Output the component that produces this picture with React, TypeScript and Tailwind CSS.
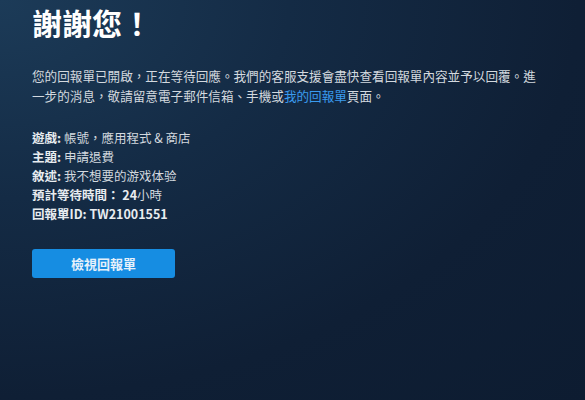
export default function App() {
  const font = { fontFamily: '"Noto Sans CJK TC", "Noto Sans", sans-serif' };
  return (
    <div
      lang="zh-Hant-TW"
      className="w-[585px] h-[400px] overflow-hidden bg-[radial-gradient(ellipse_at_top_left,#1c3b58_0%,#142b45_35%,#0f1f35_70%,#0d1c31_100%)] text-[#d3d9df]"
      style={font}
    >
      <div className="pl-[32px] pt-[3px] w-[545px]">
        <h1 className="text-[30px] leading-[38px] font-bold text-white">謝謝您！</h1>
        <p className="mt-[25px] text-[12.6px] leading-[20px] w-[505px]">
          您的回報單已開啟，正在等待回應。我們的客服支援會盡快查看回報單內容並予以回覆。進一步的消息，敬請留意電子郵件信箱、手機或
          <span className="text-[#3a9bef]">我的回報單</span>頁面。
        </p>
        <div className="mt-[22px] flex flex-col text-[12.5px] leading-[19px]">
          <div>
            <span className="font-bold text-[#e8ecf0]">遊戲:</span> 帳號，應用程式 &amp; 商店
          </div>
          <div>
            <span className="font-bold text-[#e8ecf0]">主題:</span> 申請退費
          </div>
          <div>
            <span className="font-bold text-[#e8ecf0]">敘述:</span> 我不想要的游戏体验
          </div>
          <div>
            <span className="font-bold text-[#e8ecf0]">預計等待時間： 24</span>小時
          </div>
          <div>
            <span className="font-bold text-[#e8ecf0]">回報單ID: TW21001551</span>
          </div>
        </div>
        <button className="mt-[26px] w-[143px] h-[29px] rounded-[3px] bg-[#168de2] text-[13px] font-bold text-[#e6f1fb] flex items-center justify-center">
          檢視回報單
        </button>
      </div>
    </div>
  );
}
